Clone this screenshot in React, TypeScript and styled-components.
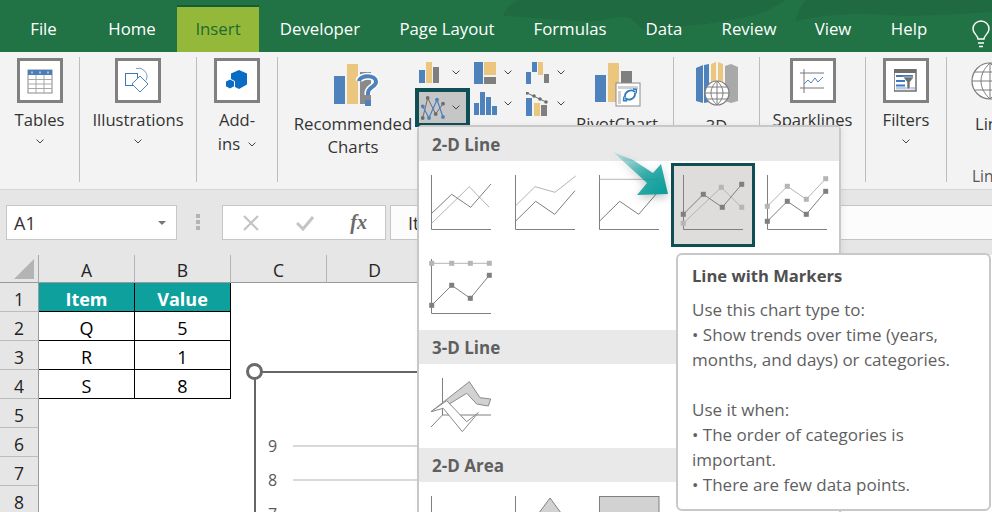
import React from 'react';
import styled, { createGlobalStyle } from 'styled-components';

const GlobalStyle = createGlobalStyle`
  html, body {
    margin: 0;
    padding: 0;
    width: 992px;
    height: 512px;
    overflow: hidden;
    background: #fff;
  }
  * {
    box-sizing: border-box;
  }
`;

const UI_FONT = `"Open Sans", "Noto Sans", "Liberation Sans", sans-serif`;

const TABS = [
  { name: 'File', width: 87 },
  { name: 'Home', width: 90 },
  { name: 'Insert', width: 82, active: true },
  { name: 'Developer', width: 122 },
  { name: 'Page Layout', width: 132 },
  { name: 'Formulas', width: 114 },
  { name: 'Data', width: 74 },
  { name: 'Review', width: 96 },
  { name: 'View', width: 72 },
  { name: 'Help', width: 80 },
];

const Chevron = () => (
  <ChevronSvg viewBox="0 0 8 5">
    <path d="M.6.6 4 4 7.4.6" fill="none" stroke="#444" strokeWidth="1" />
  </ChevronSvg>
);

const TablesIcon = () => (
  <svg width="26" height="26" viewBox="0 0 26 26">
    <rect x="1" y="2" width="24" height="23" fill="#fff" stroke="#8a8a8a" />
    <rect x="1" y="2" width="24" height="5" fill="#4a7eba" />
    <path d="M1 11.5h24M1 16h24M1 20.5h24M9 7v18M17 7v18" stroke="#a8a8a8" />
    <path d="M5 3.5v2M13 3.5v2M21 3.5v2" stroke="#fff" />
  </svg>
);

const ShapesIcon = () => (
  <svg width="28" height="28" viewBox="0 0 28 28">
    <rect x="1.5" y="6.5" width="12" height="12" fill="none" stroke="#3f78b8" />
    <path d="M12 1.5a8.5 8.5 0 0 1 10 12" fill="none" stroke="#7d9fc8" />
    <path d="M16 9l8 8-8 8-8-8z" fill="#fff" stroke="#4f83bd" />
  </svg>
);

const AddinIcon = () => (
  <svg width="24" height="22" viewBox="0 0 24 22">
    <path d="M14 0l8 3.5v11L14 19l-4-2v-3l-2-1-2-1V3.500z" fill="#0a6cc4" />
    <path d="M5 9l4.500 2.300v5.200L5 19 .5 16.500v-5.200z" fill="#0a6cc4" stroke="#fff" />
  </svg>
);

const RecommendedIcon = () => (
  <svg width="46" height="46" viewBox="0 0 46 46">
    <rect x="1" y="13" width="11" height="28" fill="#4d82bc" />
    <rect x="14" y="1" width="11" height="40" fill="#eac67e" />
    <rect x="27" y="9" width="11" height="32" fill="#8a8a8a" />
    <path d="M26 18c1-6 17-7 17 1 0 5-8 5-8 11v2" fill="none" stroke="#fff" strokeWidth="7" />
    <path d="M26 18c1-6 17-7 17 1 0 5-8 5-8 11v2" fill="none" stroke="#4d82bc" strokeWidth="4" />
    <rect x="32" y="37" width="6" height="6" fill="#4d82bc" />
  </svg>
);

const SmallBars = () => (
  <svg width="22" height="22" viewBox="0 0 22 22">
    <rect x="0" y="8" width="6" height="13" fill="#4d82bc" />
    <rect x="7" y="0" width="6" height="21" fill="#eac67e" />
    <rect x="14" y="5" width="6" height="16" fill="#7f7f7f" />
  </svg>
);

const SmallTreemap = () => (
  <svg width="22" height="22" viewBox="0 0 22 22">
    <rect x="0" y="0" width="9" height="22" fill="#4d82bc" />
    <rect x="10" y="0" width="12" height="13" fill="#eac67e" />
    <rect x="10" y="15" width="12" height="7" fill="#7f7f7f" />
  </svg>
);

const SmallWaterfall = () => (
  <svg width="24" height="22" viewBox="0 0 24 22">
    <rect x="0" y="10" width="5" height="12" fill="#4d82bc" />
    <rect x="6" y="0" width="5" height="10" fill="#4d82bc" />
    <rect x="12" y="0" width="5" height="13" fill="#eac67e" />
    <rect x="18" y="12" width="5" height="9" fill="#7f7f7f" />
  </svg>
);

const SmallLines = () => (
  <svg width="26" height="24" viewBox="0 0 26 24">
    <polyline points="1.7,22 6.7,2 14.7,18 22,7.7" fill="none" stroke="#6d6d6d" />
    <polyline points="1.7,10.300 8,22 16,3.700 22,21" fill="none" stroke="#4d82bc" strokeWidth="1.200" />
    {[[1.7, 22], [6.7, 2], [14.7, 18], [22, 7.7]].map(([x, y]) => (
      <circle key={x} cx={x} cy={y} r="1.900" fill="#6d6d6d" />
    ))}
    {[[1.7, 10.3], [8, 22], [16, 3.7], [22, 21]].map(([x, y]) => (
      <circle key={x} cx={x} cy={y} r="1.900" fill="#4d82bc" />
    ))}
  </svg>
);

const SmallColumns = () => (
  <svg width="24" height="23" viewBox="0 0 24 23">
    <rect x="0" y="11" width="5" height="12" fill="#4d82bc" />
    <rect x="6" y="0" width="5" height="23" fill="#4d82bc" />
    <rect x="12" y="5" width="5" height="18" fill="#4d82bc" />
    <rect x="18" y="14" width="5" height="9" fill="#4d82bc" />
  </svg>
);

const SmallCombo = () => (
  <svg width="22" height="24" viewBox="0 0 22 24">
    <rect x="0" y="6" width="6" height="18" fill="#4d82bc" />
    <rect x="8" y="11" width="6" height="13" fill="#eac67e" />
    <rect x="15" y="13" width="6" height="11" fill="#7f7f7f" />
    <path d="M1 1 20 10" stroke="#6d6d6d" />
    {[[1, 1], [8, 4], [14, 7], [20, 10]].map(([x, y]) => (
      <circle key={x} cx={x} cy={y} r="1.800" fill="#6d6d6d" />
    ))}
  </svg>
);

const PivotIcon = () => (
  <svg width="46" height="44" viewBox="0 0 46 44">
    <rect x="0" y="12" width="11" height="27" fill="#4d82bc" />
    <rect x="13" y="0" width="11" height="39" fill="#eac67e" />
    <rect x="26" y="8" width="11" height="31" fill="#7f7f7f" />
    <rect x="21" y="20" width="24" height="23" fill="#fff" stroke="#8a8a8a" />
    <path d="M23 23h20v3H23zM23 28h3v13h-3z" fill="#d0d0d0" />
    <path d="M30 34a6 6 0 0 1 10-5M40 30a6 6 0 0 1-10 5" fill="none" stroke="#2f7bc0" strokeWidth="1.800" />
    <path d="M38 26l3.500.5-.5 4M32 38l-3.500-.5.5-4" fill="none" stroke="#2f7bc0" strokeWidth="1.500" />
  </svg>
);

const MapIcon = () => (
  <svg width="42" height="44" viewBox="0 0 42 44">
    <path d="M0 6l7-3v38l-7-2z" fill="#4d82bc" />
    <path d="M8 3l5-1v38l-5 1z" fill="#4d82bc" />
    <path d="M15 2l5-2v36h-5zM22 0l5 2v34h-5z" fill="#eac67e" />
    <path d="M29 4l6-2 7 3v34l-7 2-6-2z" fill="#a9a9a9" />
    <circle cx="21" cy="31" r="12" fill="#fff" stroke="#7c7c7c" strokeWidth="1.200" />
    <path d="M9 31h24M11 25h20M11 37h20M21 19v24M21 19c-8 7-8 17 0 24M21 19c8 7 8 17 0 24" fill="none" stroke="#7c7c7c" />
  </svg>
);

const SparkIcon = () => (
  <svg width="26" height="24" viewBox="0 0 26 24">
    <path d="M4 0v24M0 4h24M0 19h24" stroke="#777" />
    <path d="M4 15l4-4 3 3 4-5 3 4 5-5" fill="none" stroke="#4d82bc" />
  </svg>
);

const FilterIcon = () => (
  <svg width="24" height="24" viewBox="0 0 24 24">
    <rect x="0" y="0" width="22" height="22" fill="#fff" stroke="#6e6e6e" strokeWidth="1.500" />
    <rect x="0" y="0" width="22" height="4" fill="#6e6e6e" />
    <path d="M2 7h17M2 12h9M2 16.500h9" stroke="#3f78b8" strokeWidth="2" />
    <rect x="2" y="18" width="19" height="2.500" fill="#b9cde4" />
    <path d="M9 8h11l-4 5v7h-3v-7z" fill="#6e6e6e" stroke="#fff" strokeWidth=".6" />
  </svg>
);

const LinkIcon = () => (
  <svg width="40" height="46" viewBox="0 0 40 46">
    <circle cx="22" cy="20" r="18" fill="#fff" stroke="#7c7c7c" strokeWidth="1.200" />
    <path d="M4 20h36M7 11h30M7 29h30M22 2v36M22 2c-12 11-12 25 0 36M22 2c12 11 12 25 0 36" fill="none" stroke="#7c7c7c" />
    <circle cx="33" cy="38" r="6" fill="none" stroke="#2f7bc0" strokeWidth="3.500" />
  </svg>
);

type ChartLine = { points: number[][]; color: string; markers?: boolean };

const DARK = '#7f7f7f';
const LIGHT = '#b5b5b5';

const LINE_TILES: { lines: ChartLine[]; selected?: boolean }[] = [
  {
    lines: [
      { points: [[12.7, 60.3], [50.3, 23.7], [70.3, 44.3]], color: LIGHT },
      { points: [[12.7, 50.3], [32.7, 31.3], [51.7, 44.3], [72, 21]], color: DARK },
    ],
  },
  {
    lines: [
      { points: [[12.7, 42.7], [32, 23.7], [52, 29.3], [72.7, 13]], color: LIGHT },
      { points: [[12.7, 58], [32.7, 38.3], [51.7, 51.3], [72, 27.7]], color: DARK },
    ],
  },
  {
    lines: [
      { points: [[12.7, 16.3], [72, 16.3]], color: LIGHT },
      { points: [[12.7, 58], [32.7, 38.3], [51.7, 51.3], [72, 27.7]], color: DARK },
    ],
  },
  {
    selected: true,
    lines: [
      { points: [[12.3, 60.3], [50.3, 24.3], [70.7, 44.3]], color: LIGHT, markers: true },
      { points: [[12.3, 51.3], [32.3, 31.3], [51.3, 44.3], [70.7, 21.3]], color: DARK, markers: true },
    ],
  },
  {
    lines: [
      { points: [[12.3, 43.3], [32.3, 23.3], [51.3, 36.3], [70.7, 15.7]], color: LIGHT, markers: true },
      { points: [[12.3, 58.3], [32.3, 38.3], [51.3, 51.3], [70.7, 28.3]], color: DARK, markers: true },
    ],
  },
  {
    lines: [
      { points: [[12.7, 16.3], [32.7, 16.3], [51.3, 16.3], [70.3, 16.3]], color: LIGHT, markers: true },
      { points: [[12.7, 58.3], [32.7, 38.3], [51.3, 51.3], [70.3, 28.3]], color: DARK, markers: true },
    ],
  },
];

const LineChartThumb = ({ lines }: { lines: ChartLine[] }) => (
  <svg width="84" height="84" viewBox="0 0 84 84">
    <path d="M12.500 12v54.500H72" fill="none" stroke="#808080" />
    {lines.map((line) => (
      <g key={line.points.join()}>
        <polyline points={line.points.join(' ')} fill="none" stroke={line.color} />
        {line.markers &&
          line.points.map(([x, y]) => (
            <rect key={x} x={x - 2.5} y={y - 2.5} width="5" height="5" fill={line.color} />
          ))}
      </g>
    ))}
  </svg>
);

const Line3DThumb = () => (
  <svg width="84" height="84" viewBox="0 0 84 84">
    <path d="M23.500 12v37H72M23.500 49 12 61" fill="none" stroke="#808080" />
    <path d="M12 45.700 50.300 15.700 61 31.700 71.700 33 69.300 40 57.700 38 47.700 27.300 27 40z" fill="#d2d2d2" stroke="#8a8a8a" />
    <path d="M12 45.700 27.700 34.700 47.700 55.700 59.300 46.700 43.300 65.700 24.300 42.300z" fill="#fff" stroke="#8a8a8a" />
  </svg>
);

const AreaThumb = ({ kind }: { kind: number }) => (
  <svg width="84" height="84" viewBox="0 0 84 84">
    {kind === 2 ? (
      <rect x="12.500" y="12.500" width="59.500" height="54" fill="#d2d2d2" stroke="#808080" />
    ) : (
      <path d="M12.500 12v54.500H72" fill="none" stroke="#808080" />
    )}
    {kind === 1 && <path d="M13 60 47 14l25 34v18H13z" fill="#d2d2d2" stroke="#808080" />}
  </svg>
);

const ROW_COUNT = 8;
const COLUMNS = ['A', 'B', 'C', 'D'];
const TABLE = [
  ['Item', 'Value'],
  ['Q', '5'],
  ['R', '1'],
  ['S', '8'],
];

const App = () => {
  return (
    <Page>
      <GlobalStyle />
      <TabBar>
        <TabTexture viewBox="0 0 992 52" preserveAspectRatio="none">
          <path d="M503 16C508 6 512 2 520 0h266c-6 4-12 7-16 9-8 4-14 6-19 7-20 4-40 8-59 9-14 1-26 8-39 10-10-4-16-12-23-17-12-3-22 2-35 3-24 1-60-4-92-5z" fill="#1f6a41" />
          <path d="M806 0c-6 6-9 14-10 21 30-7 60-8 90-6 36 2 72-1 106-3V0z" fill="#1f6a41" />
        </TabTexture>
        {TABS.map((tab) => (
          <Tab key={tab.name} $width={tab.width} $active={tab.active}>
            {tab.name}
          </Tab>
        ))}
        <BulbSlot>
          <svg width="18" height="28" viewBox="0 0 18 28">
            <path d="M6 19c0-4-5-5-5-10a8 8 0 0 1 16 0c0 5-5 6-5 10z" fill="none" stroke="#fff" strokeWidth="1.400" />
            <path d="M6 23h6M7 26.500h4" stroke="#fff" strokeWidth="1.600" />
          </svg>
        </BulbSlot>
      </TabBar>

      <Ribbon>
        <Group $width={80}>
          <IconBox><TablesIcon /></IconBox>
          <Label>Tables</Label>
          <Chevron />
        </Group>
        <Group $width={117}>
          <IconBox><ShapesIcon /></IconBox>
          <Label>Illustrations</Label>
          <Chevron />
        </Group>
        <Group $width={81}>
          <IconBox><AddinIcon /></IconBox>
          <Label>Add-</Label>
          <InlineLabel>ins <Chevron /></InlineLabel>
        </Group>
        <ChartsGroup>
          <BigCommand $width={120}>
            <BigIcon $top={6} $shift={6}><RecommendedIcon /></BigIcon>
            <WrapLabel>Recommended</WrapLabel>
            <WrapLabel>Charts</WrapLabel>
          </BigCommand>
          <SmallGrid>
            <SmallCell $width={55}><SmallBars /><Chevron /></SmallCell>
            <SmallCell $width={52}><SmallTreemap /><Chevron /></SmallCell>
            <SmallCell $width={53}><SmallWaterfall /><Chevron /></SmallCell>
            <SmallCell $width={55} $selected><SmallLines /><Chevron /></SmallCell>
            <SmallCell $width={52}><SmallColumns /><Chevron /></SmallCell>
            <SmallCell $width={53}><SmallCombo /><Chevron /></SmallCell>
          </SmallGrid>
          <BigCommand $width={84}>
            <BigIcon $top={6} $shift={2}><PivotIcon /></BigIcon>
            <WrapLabel>PivotChart</WrapLabel>
          </BigCommand>
        </ChartsGroup>
        <Group $width={86}>
          <BigIcon $top={4}><MapIcon /></BigIcon>
          <Label>3D</Label>
        </Group>
        <Group $width={106}>
          <IconBox><SparkIcon /></IconBox>
          <Label>Sparklines</Label>
        </Group>
        <Group $width={81}>
          <IconBox><FilterIcon /></IconBox>
          <Label>Filters</Label>
          <Chevron />
        </Group>
        <LinksGroup>
          <LinkIcon />
          <LinksLabel>Links</LinksLabel>
          <LinksCaption>Links</LinksCaption>
        </LinksGroup>
      </Ribbon>

      <FormulaBar>
        <NameBox>
          A1
          <svg width="8" height="4" viewBox="0 0 8 4"><path d="M0 0h8L4 4z" fill="#777" /></svg>
        </NameBox>
        <BarDots />
        <FormulaButtons>
          <svg width="16" height="16" viewBox="0 0 16 16">
            <path d="M1 1l14 14M15 1 1 15" stroke="#c4c4c4" strokeWidth="2.200" />
          </svg>
          <svg width="18" height="16" viewBox="0 0 18 16">
            <path d="M1 8l6 6L17 2" fill="none" stroke="#c4c4c4" strokeWidth="3" />
          </svg>
          <FxMark>fx</FxMark>
        </FormulaButtons>
        <FormulaInput>Item</FormulaInput>
      </FormulaBar>

      <Sheet>
        <Corner>
          <svg width="20" height="20" viewBox="0 0 20 20"><path d="M20 0v20H0z" fill="#b4b4b4" /></svg>
        </Corner>
        {COLUMNS.map((col) => (
          <ColHead key={col}>{col}</ColHead>
        ))}
        {Array.from({ length: ROW_COUNT }, (_, r) => (
          <React.Fragment key={r}>
            <RowHead>{r + 1}</RowHead>
            {COLUMNS.map((col, c) => {
              const value = TABLE[r]?.[c];
              return value ? (
                <TableCell key={col} $header={r === 0}>{value}</TableCell>
              ) : (
                <EmptyCell key={col} />
              );
            })}
          </React.Fragment>
        ))}
        <ChartObject>
          <ChartHandle />
          <ChartRows>
            {[9, 8, 7].map((n) => (
              <ChartRow key={n}>
                <AxisLabel>{n}</AxisLabel>
                <GridLine />
              </ChartRow>
            ))}
          </ChartRows>
        </ChartObject>
      </Sheet>

      <Dropdown>
        <SectionHeader>2-D Line</SectionHeader>
        <TileGrid $overlap={1}>
          {LINE_TILES.map((tile) => (
            <Tile key={tile.lines[1].points.join() + tile.lines[0].points.join()} $selected={tile.selected}>
              <LineChartThumb lines={tile.lines} />
            </Tile>
          ))}
        </TileGrid>
        <SectionHeader>3-D Line</SectionHeader>
        <TileGrid $overlap={2}>
          <Tile><Line3DThumb /></Tile>
        </TileGrid>
        <SectionHeader>2-D Area</SectionHeader>
        <TileGrid $overlap={0}>
          {[0, 1, 2].map((kind) => (
            <Tile key={kind}><AreaThumb kind={kind} /></Tile>
          ))}
        </TileGrid>
      </Dropdown>

      <Pointer viewBox="0 0 62 48" width="62" height="48">
        <defs>
          <linearGradient id="pointerFill" x1="0" y1="0" x2="1" y2="0.8">
            <stop offset="0" stopColor="#0da09d" stopOpacity=".12" />
            <stop offset="0.6" stopColor="#0da09d" stopOpacity=".8" />
            <stop offset="1" stopColor="#0da09d" />
          </linearGradient>
        </defs>
        <path d="M1 0 21 8 41 21 49 12 56 42 25 43 35 31z" fill="url(#pointerFill)" />
      </Pointer>

      <ChartTip>
        <TipTitle>Line with Markers</TipTitle>
        <TipBody>
          Use this chart type to:
          <br />• Show trends over time (years,
          <br />months, and days) or categories.
          <br />
          <br />Use it when:
          <br />• The order of categories is
          <br />important.
          <br />• There are few data points.
        </TipBody>
      </ChartTip>
    </Page>
  );
};

export default App;

const Page = styled.div`
  position: relative;
  width: 992px;
  height: 512px;
  overflow: hidden;
  display: flex;
  flex-direction: column;
  font-family: ${UI_FONT};
  color: #444;
`;

const TabBar = styled.div`
  position: relative;
  display: flex;
  align-items: flex-end;
  height: 52px;
  flex: none;
  background: #217346;
`;

const TabTexture = styled.svg`
  position: absolute;
  inset: 0;
  width: 100%;
  height: 100%;
`;

const Tab = styled.div<{ $width: number; $active?: boolean }>`
  position: relative;
  width: ${(p) => p.$width}px;
  height: 47px;
  flex: none;
  display: flex;
  align-items: center;
  justify-content: center;
  padding-bottom: 3px;
  font-size: 16.8px;
  color: ${(p) => (p.$active ? '#1d6a30' : '#fff')};
  background: ${(p) => (p.$active ? '#94b93a' : 'transparent')};
  border-top: 2px solid ${(p) => (p.$active ? '#185c37' : 'transparent')};
`;

const BulbSlot = styled.div`
  position: relative;
  flex: 1;
  height: 47px;
  display: flex;
  align-items: flex-start;
  justify-content: flex-end;
  padding: 15px 2px 0 0;
`;

const Ribbon = styled.div`
  display: flex;
  height: 138px;
  flex: none;
  padding: 5px 0 7px;
  background: #f3f3f3;
  border-bottom: 1px solid #d6d6d6;
`;

const Group = styled.div<{ $width: number }>`
  width: ${(p) => p.$width}px;
  flex: none;
  display: flex;
  flex-direction: column;
  align-items: center;
  padding-top: 1px;
  border-right: 1px solid #bdbdbd;
`;

const ChartsGroup = styled.div`
  width: 396px;
  flex: none;
  display: flex;
  padding-left: 15px;
  border-right: 1px solid #bdbdbd;
`;

const LinksGroup = styled.div`
  position: relative;
  flex: 1;
  padding: 4px 0 0 21px;
  overflow: hidden;
`;

const LinksLabel = styled.div`
  margin-left: 7px;
  margin-top: 1px;
  font-size: 16.6px;
  line-height: 22px;
  color: #333;
`;

const LinksCaption = styled.div`
  position: absolute;
  left: 25px;
  top: 109px;
  font-size: 15.5px;
  line-height: 20px;
  color: #555;
`;

const IconBox = styled.div`
  width: 46px;
  height: 45px;
  flex: none;
  display: flex;
  align-items: center;
  justify-content: center;
  background: #fff;
  border: 3px solid #808080;
`;

const Label = styled.div`
  margin-top: 5px;
  font-size: 16.6px;
  line-height: 24px;
  color: #333;
  white-space: nowrap;
`;

const InlineLabel = styled.div`
  display: flex;
  align-items: center;
  gap: 8px;
  font-size: 16.6px;
  line-height: 24px;
  color: #333;
`;

const ChevronSvg = styled.svg`
  display: block;
  width: 8px;
  height: 5px;
  margin-top: 7px;
  flex: none;

  ${InlineLabel} & {
    margin-top: 0;
  }
`;

const BigCommand = styled.div<{ $width: number }>`
  width: ${(p) => p.$width}px;
  flex: none;
  display: flex;
  flex-direction: column;
  align-items: center;
`;

const BigIcon = styled.div<{ $top: number; $shift?: number }>`
  height: 51px;
  padding-top: ${(p) => p.$top}px;
  padding-left: ${(p) => p.$shift ?? 0}px;
  flex: none;
`;

const WrapLabel = styled.div`
  font-size: 16.8px;
  line-height: 23px;
  color: #333;
  white-space: nowrap;

  &:nth-child(2) {
    margin-top: 4px;
  }
`;

const SmallGrid = styled.div`
  width: 160px;
  margin-left: 2px;
  flex: none;
  display: flex;
  flex-wrap: wrap;
  align-content: flex-start;
`;

const SmallCell = styled.div<{ $width: number; $selected?: boolean }>`
  width: ${(p) => p.$width}px;
  height: ${(p) => (p.$selected ? 39 : 31)}px;
  display: flex;
  align-items: center;
  justify-content: space-between;
  padding: 0 ${(p) => (p.$selected ? 6 : 10)}px 0 ${(p) => (p.$selected ? 2 : 4)}px;
  background: ${(p) => (p.$selected ? '#c6c6c6' : 'transparent')};
  border: ${(p) => (p.$selected ? '4px solid #0e4f55' : 'none')};

  & svg:last-child {
    margin-top: 0;
  }
`;

const FormulaBar = styled.div`
  display: flex;
  align-items: flex-start;
  height: 65px;
  flex: none;
  padding: 15px 0 0 6px;
  background: #e6e6e6;
`;

const NameBox = styled.div`
  width: 171px;
  height: 35px;
  flex: none;
  display: flex;
  align-items: center;
  justify-content: space-between;
  padding: 0 10px 0 7px;
  font-size: 18px;
  color: #333;
  background: #fff;
  border: 1px solid #c6c6c6;
`;

const BarDots = styled.div`
  width: 4px;
  height: 16px;
  flex: none;
  margin: 9px 0 0 19px;
  background: repeating-linear-gradient(#b4b4b4 0 4px, transparent 4px 6px);
`;

const FormulaButtons = styled.div`
  width: 164px;
  height: 35px;
  flex: none;
  margin-left: 22px;
  display: flex;
  align-items: center;
  justify-content: space-between;
  padding: 0 18px 0 20px;
  background: #fff;
  border: 1px solid #c6c6c6;
`;

const FxMark = styled.span`
  font-family: "Liberation Serif", serif;
  font-style: italic;
  font-weight: 700;
  font-size: 20px;
  color: #6a6a6a;
`;

const FormulaInput = styled.div`
  flex: 1;
  height: 35px;
  margin-left: 4px;
  padding-left: 17px;
  display: flex;
  align-items: center;
  font-size: 18px;
  color: #333;
  background: #fcfcfc;
  border: 1px solid #c6c6c6;
  border-right: none;
`;

const Sheet = styled.div`
  position: relative;
  flex: 1;
  display: grid;
  grid-template-columns: 39px repeat(4, 96px);
  grid-template-rows: 28px;
  grid-auto-rows: 29px;
  overflow: hidden;
  background: #fff;
`;

const Corner = styled.div`
  display: flex;
  align-items: flex-end;
  justify-content: flex-end;
  padding: 0 4px 3px 0;
  background: #e6e6e6;
  border-right: 1px solid #a8a8a8;
  border-bottom: 1px solid #9a9a9a;
`;

const ColHead = styled.div`
  display: flex;
  align-items: center;
  justify-content: center;
  padding-top: 3px;
  font-size: 17.5px;
  color: #222;
  background: #e6e6e6;
  border-right: 1px solid #b4b4b4;
  border-bottom: 1px solid #9a9a9a;
`;

const RowHead = styled.div`
  display: flex;
  align-items: center;
  justify-content: center;
  padding-top: 3px;
  font-size: 17.5px;
  color: #222;
  background: #e6e6e6;
  border-right: 1px solid #9a9a9a;
  border-bottom: 1px solid #bcbcbc;
`;

const EmptyCell = styled.div`
  background: #fff;
`;

const TableCell = styled.div<{ $header?: boolean }>`
  display: flex;
  align-items: center;
  justify-content: center;
  padding-top: 3px;
  font-size: 18px;
  font-weight: ${(p) => (p.$header ? 700 : 400)};
  color: ${(p) => (p.$header ? '#fff' : '#000')};
  background: ${(p) => (p.$header ? '#0da09d' : '#fff')};
  border-right: 1px solid #000;
  border-bottom: 1px solid #000;
`;

const ChartObject = styled.div`
  position: absolute;
  left: 254px;
  top: 116px;
  width: 300px;
  height: 260px;
  background: #fff;
  border-left: 2px solid #666;
  border-top: 2px solid #666;
`;

const ChartHandle = styled.div`
  position: absolute;
  left: -10px;
  top: -10px;
  width: 17px;
  height: 17px;
  background: #fff;
  border: 3px solid #6a6a6a;
  border-radius: 50%;
`;

const ChartRows = styled.div`
  padding-top: 56px;
`;

const ChartRow = styled.div`
  display: flex;
  align-items: center;
  height: 34px;
`;

const AxisLabel = styled.div`
  width: 37px;
  padding-left: 12px;
  flex: none;
  font-size: 16px;
  color: #595959;
`;

const GridLine = styled.div`
  flex: 1;
  height: 2px;
  background: #d9d9d9;
`;

const Dropdown = styled.div`
  position: absolute;
  left: 417px;
  top: 125px;
  width: 424px;
  height: 400px;
  background: #fff;
  border: 2px solid #c8c8c8;
  border-radius: 5px 5px 0 0;
  box-shadow: 2px 0 6px rgba(0, 0, 0, 0.06);
`;

const SectionHeader = styled.div`
  height: 34px;
  padding-left: 13px;
  display: flex;
  align-items: center;
  font-size: 17px;
  font-weight: 700;
  color: #5f5f5f;
  background: #e9e9e9;
`;

const TileGrid = styled.div<{ $overlap: number }>`
  display: grid;
  grid-template-columns: repeat(5, 84px);
  grid-auto-rows: 84px;
  padding-top: 2px;
  margin-bottom: -${(p) => p.$overlap}px;
`;

const Tile = styled.div<{ $selected?: boolean }>`
  position: relative;
  background: ${(p) => (p.$selected ? '#dfdddb' : 'transparent')};
  box-shadow: ${(p) => (p.$selected ? 'inset 0 0 0 3px #0e4f55' : 'none')};

  & svg {
    display: block;
  }
`;

const Pointer = styled.svg`
  position: absolute;
  left: 612px;
  top: 152px;
  filter: drop-shadow(0 3px 4px rgba(0, 0, 0, 0.25));
`;

const ChartTip = styled.div`
  position: absolute;
  left: 676px;
  top: 253px;
  width: 315px;
  height: 258px;
  padding: 9px 14px;
  background: #fff;
  border: 2px solid #c8c8c8;
  border-radius: 6px;
`;

const TipTitle = styled.div`
  font-size: 16.6px;
  font-weight: 700;
  line-height: 24px;
  color: #4f4f4f;
`;

const TipBody = styled.div`
  margin-top: 9px;
  font-size: 17px;
  line-height: 25px;
  color: #5f5f5f;
  white-space: nowrap;
`;
